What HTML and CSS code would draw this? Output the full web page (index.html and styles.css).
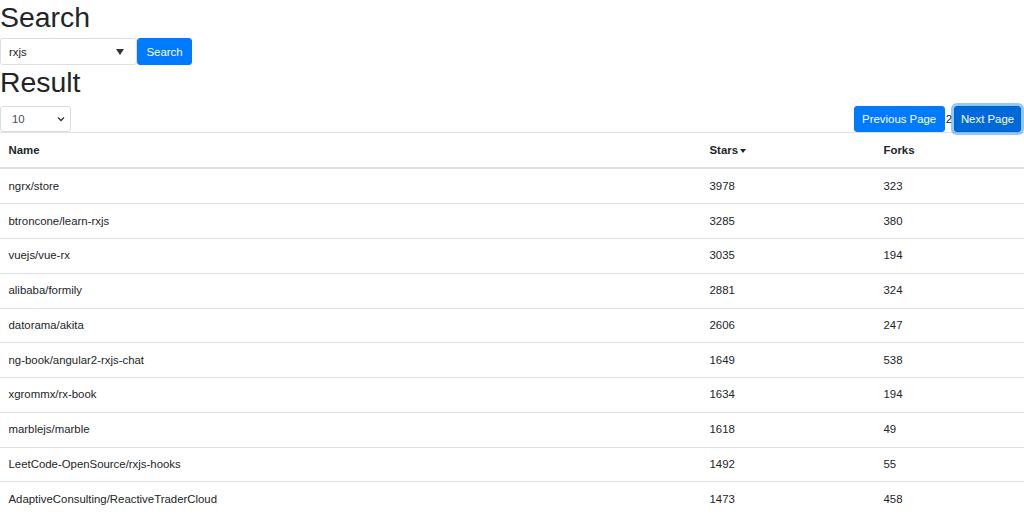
FILE: index.html
```html
<!DOCTYPE html>
<html>
<head>
<meta charset="utf-8">
<link rel="stylesheet" href="styles.css">
</head>
<body>
<h1 class="title">Search</h1>
<div class="search-row">
  <div class="combo"><span>rxjs</span><span class="tri"></span></div><button class="btn">Search</button>
</div>
<h1 class="title">Result</h1>
<div class="toolbar">
  <div class="select"><span>10</span><svg class="chev" width="8" height="6" viewBox="0 0 8 6"><path d="M1 1.5 L4 4.5 L7 1.5" fill="none" stroke="#343a40" stroke-width="1.4"/></svg></div>
  <div class="pager">
    <button class="btn">Previous Page</button><span class="page-num">2</span><button class="btn focus">Next Page</button>
  </div>
</div>
<table class="table">
  <thead>
    <tr><th class="c-name">Name</th><th class="c-stars">Stars <span class="caret"></span></th><th class="c-forks">Forks</th></tr>
  </thead>
  <tbody>
    <tr><td>ngrx/store</td><td>3978</td><td>323</td></tr>
    <tr><td>btroncone/learn-rxjs</td><td>3285</td><td>380</td></tr>
    <tr><td>vuejs/vue-rx</td><td>3035</td><td>194</td></tr>
    <tr><td>alibaba/formily</td><td>2881</td><td>324</td></tr>
    <tr><td>datorama/akita</td><td>2606</td><td>247</td></tr>
    <tr><td>ng-book/angular2-rxjs-chat</td><td>1649</td><td>538</td></tr>
    <tr><td>xgrommx/rx-book</td><td>1634</td><td>194</td></tr>
    <tr><td>marblejs/marble</td><td>1618</td><td>49</td></tr>
    <tr><td>LeetCode-OpenSource/rxjs-hooks</td><td>1492</td><td>55</td></tr>
    <tr><td>AdaptiveConsulting/ReactiveTraderCloud</td><td>1473</td><td>458</td></tr>
  </tbody>
</table>
</body>
</html>
```

FILE: styles.css
```css
html, body {
  margin: 0;
  padding: 0;
  background: #fff;
}
body {
  font-family: "Liberation Sans", Arial, sans-serif;
  font-size: 11.4px;
  color: #212529;
}
.title {
  font-size: 28.4px;
  font-weight: 500;
  line-height: 34px;
  margin: 0 0 4px 0;
}
.search-row {
  display: flex;
  align-items: stretch;
  height: 27px;
}
.combo {
  box-sizing: border-box;
  width: 137px;
  height: 27px;
  border: 1px solid #dcdfe3;
  border-radius: 3px;
  display: flex;
  align-items: center;
  justify-content: space-between;
  padding: 0 12px 0 8px;
  color: #212529;
}
.tri {
  width: 0;
  height: 0;
  border-left: 4px solid transparent;
  border-right: 4px solid transparent;
  border-top: 6px solid #333;
}
.btn {
  box-sizing: border-box;
  font-family: inherit;
  font-size: 11.4px;
  line-height: 17px;
  color: #fff;
  background: #007bff;
  border: 1px solid #007bff;
  border-radius: 3px;
  padding: 4px 8.5px;
  height: 27px;
  margin: 0;
  cursor: pointer;
}
.search-row .btn {
  width: 55px;
  padding: 5px 0 4px;
}
.toolbar {
  display: flex;
  justify-content: space-between;
  align-items: center;
  height: 27px;
  margin-top: 6px;
}
.select {
  box-sizing: border-box;
  width: 71px;
  height: 26px;
  border: 1px solid #d8dce0;
  border-radius: 3px;
  display: flex;
  align-items: center;
  justify-content: space-between;
  padding: 0 5px 0 11px;
  color: #495057;
}
.chev {
  display: block;
}
.pager {
  display: flex;
  align-items: center;
  padding-right: 3px;
}
.pager .btn {
  height: 26px;
}
.pager .btn:first-child {
  width: 91px;
  padding: 4px 0;
}
.page-num {
  margin: 0 2px 0 1px;
}
.btn.focus {
  width: 67px;
  padding: 4px 0;
  background: #0069d9;
  border-color: #0062cc;
  box-shadow: 0 0 0 3px rgba(38, 143, 255, 0.5);
}
.table {
  width: 100%;
  border-collapse: collapse;
  margin: 0;
}
.table th, .table td {
  text-align: left;
  padding: 8.4px 8.5px;
  line-height: 17px;
  border-top: 1px solid #dee2e6;
  vertical-align: top;
}
.table thead th {
  font-weight: bold;
  padding-top: 9px;
  border-bottom: 2px solid #dee2e6;
  vertical-align: bottom;
}
.c-name { width: 684px; }
.c-stars { width: 157px; }
.c-forks { width: auto; }
.caret {
  display: inline-block;
  width: 0;
  height: 0;
  border-left: 3.5px solid transparent;
  border-right: 3.5px solid transparent;
  border-top: 4px solid #212529;
  vertical-align: middle;
  margin-left: -1px;
}
```
